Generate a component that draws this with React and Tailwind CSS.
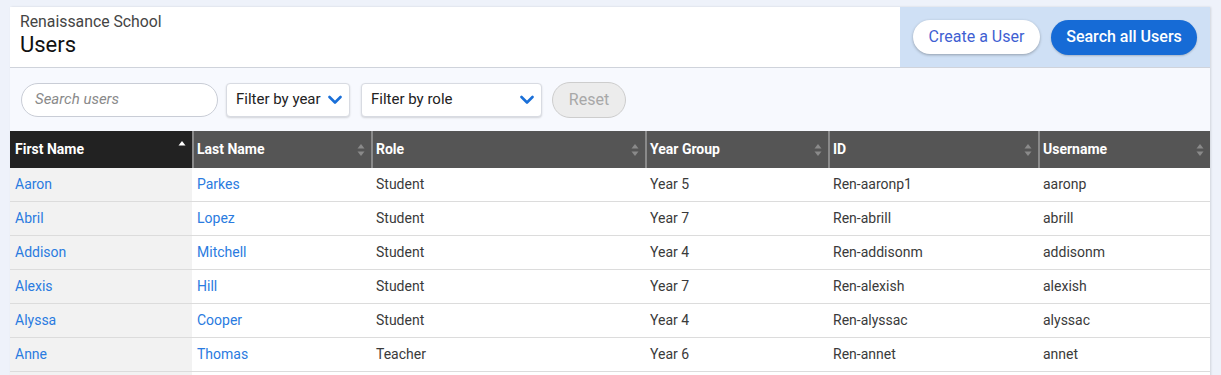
import React from "react";

const rows = [
  ["Aaron", "Parkes", "Student", "Year 5", "Ren-aaronp1", "aaronp"],
  ["Abril", "Lopez", "Student", "Year 7", "Ren-abrill", "abrill"],
  ["Addison", "Mitchell", "Student", "Year 4", "Ren-addisonm", "addisonm"],
  ["Alexis", "Hill", "Student", "Year 7", "Ren-alexish", "alexish"],
  ["Alyssa", "Cooper", "Student", "Year 4", "Ren-alyssac", "alyssac"],
  ["Anne", "Thomas", "Teacher", "Year 6", "Ren-annet", "annet"],
  ["", "", "", "", "", ""],
];

const cols = [
  { name: "First Name", w: "w-[182px]" },
  { name: "Last Name", w: "w-[179px]" },
  { name: "Role", w: "w-[274px]" },
  { name: "Year Group", w: "w-[183px]" },
  { name: "ID", w: "w-[210px]" },
  { name: "Username", w: "flex-1" },
];

function SortBoth() {
  return (
    <svg width="8" height="14" viewBox="0 0 8 14" className="shrink-0">
      <path d="M4 1 L7.5 5.5 L0.5 5.5 Z" fill="#8a8a8a" />
      <path d="M4 13 L7.5 8.5 L0.5 8.5 Z" fill="#8a8a8a" />
    </svg>
  );
}

function SortUp() {
  return (
    <svg width="8" height="14" viewBox="0 0 8 14" className="shrink-0 self-start mt-[9px]">
      <path d="M4 1 L7.5 5.5 L0.5 5.5 Z" fill="#ffffff" />
    </svg>
  );
}

function Chevron() {
  return (
    <svg width="14" height="10" viewBox="0 0 14 10">
      <path d="M1.5 2 L7 7.5 L12.5 2" fill="none" stroke="#1a6fd8" strokeWidth="2.6" strokeLinecap="round" strokeLinejoin="round" />
    </svg>
  );
}

export default function App() {
  return (
    <div
      className="w-[1221px] h-[375px] bg-[#eef2fa] overflow-hidden pt-[7px] pl-[10px]"
      style={{ fontFamily: "Roboto, 'Liberation Sans', sans-serif" }}
    >
      <div className="w-[1200px] bg-[#f7f9fe] shadow-[1px_0_2px_rgba(0,0,0,0.12)]">
        {/* Header */}
        <div className="flex h-[61px] border-b border-[#cfd3db]">
          <div className="flex-1 bg-white pl-[10px] pt-[5px]">
            <div className="text-[15.8px] leading-[19px] text-[#444]">Renaissance School</div>
            <div className="text-[22px] leading-[28px] text-[#111]">Users</div>
          </div>
          <div className="w-[310px] bg-[#cfe0f5] flex items-center gap-[11px] pl-[13px]">
            <button className="h-[34px] w-[127px] rounded-full bg-white text-[#3f5fd2] text-[16px] shadow-[0_1px_3px_rgba(0,0,0,0.3)]">
              Create a User
            </button>
            <button className="h-[35px] w-[146px] rounded-full bg-[#166bd6] text-white text-[16px] font-medium shadow-[0_1px_2px_rgba(0,0,0,0.2)]">
              Search all Users
            </button>
          </div>
        </div>

        {/* Filters */}
        <div className="flex items-center h-[63px] pl-[11px] gap-[8px]">
          <div className="h-[34px] w-[197px] rounded-full border border-[#c9cdd6] bg-white flex items-center pl-[13px] text-[15px] italic text-[#8a8a8a]">
            Search users
          </div>
          <div className="h-[34px] w-[124px] rounded-[4px] bg-white border border-[#d8dbe2] shadow-[0_1px_2px_rgba(0,0,0,0.15)] flex items-center justify-between pl-[9px] pr-[7px] text-[15px] text-[#222]">
            <span>Filter by year</span>
            <Chevron />
          </div>
          <div className="h-[34px] w-[181px] ml-[3px] rounded-[4px] bg-white border border-[#d8dbe2] shadow-[0_1px_2px_rgba(0,0,0,0.15)] flex items-center justify-between pl-[9px] pr-[7px] text-[15px] text-[#222]">
            <span>Filter by role</span>
            <Chevron />
          </div>
          <div className="h-[36px] w-[74px] ml-[2px] rounded-full bg-[#ececec] border border-[#cdcdcd] flex items-center justify-center text-[16px] text-[#a8a8a8]">
            Reset
          </div>
        </div>

        {/* Table */}
        <div className="bg-white">
          <div className="flex h-[37px] bg-[#555555] text-white text-[14px] font-bold">
            {cols.map((c, i) => (
              <div
                key={c.name}
                className={`${c.w} flex items-center justify-between pr-[6px] ${
                  i === 0 ? "bg-[#222222] pl-[5px]" : "border-l-2 border-[#8a8a8a] pl-[3px]"
                }`}
              >
                <span>{c.name}</span>
                {i === 0 ? <SortUp /> : <SortBoth />}
              </div>
            ))}
          </div>
          {rows.map((r, ri) => (
            <div key={ri} className="flex h-[34px] border-b border-[#dcdcdc] text-[14px]">
              {r.map((v, i) => (
                <div
                  key={i}
                  className={`${cols[i].w} flex items-center pl-[5px] ${
                    i === 0 ? "bg-[#f2f2f2]" : ""
                  } ${i < 2 ? "text-[#2a7be0]" : "text-[#3a3a3a]"}`}
                >
                  {v}
                </div>
              ))}
            </div>
          ))}
        </div>
      </div>
    </div>
  );
}
